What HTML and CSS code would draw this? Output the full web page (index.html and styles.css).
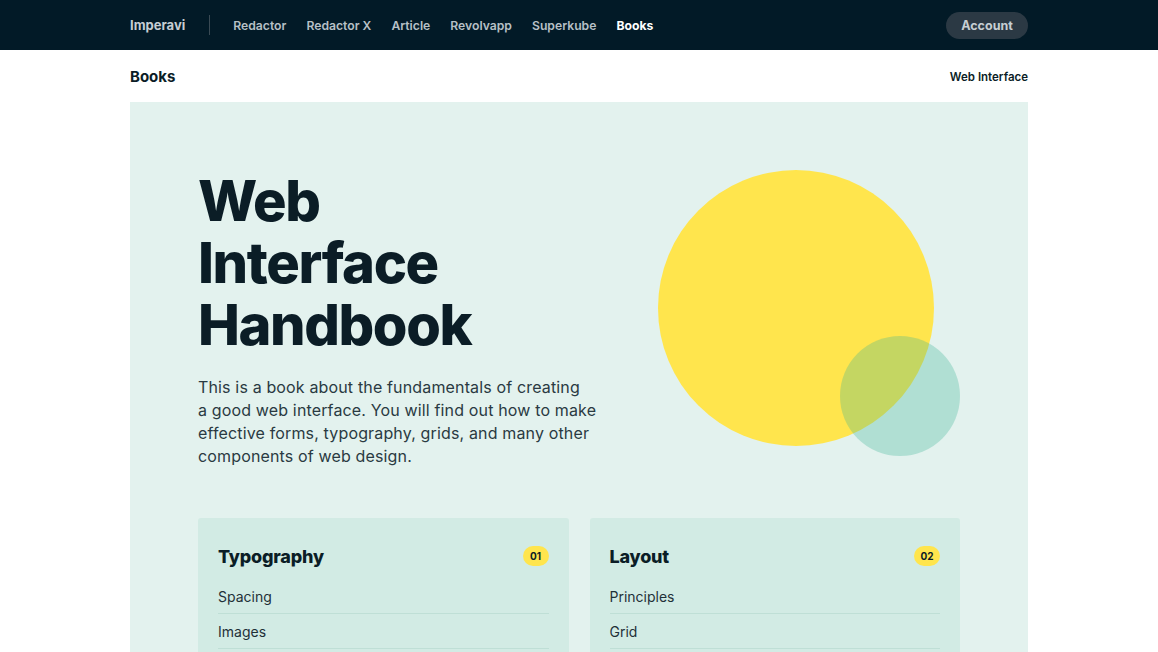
FILE: index.html
```html
<!DOCTYPE html>
<html lang="en">
<head>
<meta charset="utf-8">
<title>Web Interface Handbook</title>
<link rel="stylesheet" href="styles.css">
</head>
<body>
<header class="topbar">
  <div class="wrap topbar-inner">
    <nav class="nav">
      <a class="brand" href="#">Imperavi</a>
      <span class="divider"></span>
      <a class="nav-link" href="#">Redactor</a>
      <a class="nav-link" href="#">Redactor X</a>
      <a class="nav-link" href="#">Article</a>
      <a class="nav-link" href="#">Revolvapp</a>
      <a class="nav-link" href="#">Superkube</a>
      <a class="nav-link active" href="#">Books</a>
    </nav>
    <a class="account" href="#">Account</a>
  </div>
</header>
<div class="wrap subbar">
  <span class="sub-title">Books</span>
  <span class="sub-right">Web Interface</span>
</div>
<main class="wrap">
  <section class="hero">
    <div class="hero-top">
      <div class="hero-text">
        <h1 class="title">Web<br>Interface<br>Handbook</h1>
        <p class="lead">This is a book about the fundamentals of creating<br>a good web interface. You will find out how to make<br>effective forms, typography, grids, and many other<br>components of web design.</p>
      </div>
      <div class="art">
        <span class="circle yellow"></span>
        <span class="circle teal"></span>
      </div>
    </div>
    <div class="cards">
      <div class="card">
        <div class="card-head"><h2>Typography</h2><span class="badge">01</span></div>
        <ul class="items">
          <li>Spacing</li>
          <li>Images</li>
          <li>Text</li>
        </ul>
      </div>
      <div class="card">
        <div class="card-head"><h2>Layout</h2><span class="badge">02</span></div>
        <ul class="items">
          <li>Principles</li>
          <li>Grid</li>
          <li>Alignment</li>
        </ul>
      </div>
    </div>
  </section>
</main>
</body>
</html>
```
FILE: styles.css
```css
* { box-sizing: border-box; }
html, body { margin: 0; padding: 0; }
body {
  font-family: "Inter", "Noto Sans", sans-serif;
  color: #0b1d26;
  background: #fff;
  overflow: hidden;
  height: 652px;
}
a { text-decoration: none; color: inherit; }
.wrap { width: 898px; margin: 0 auto; }

.topbar { background: #021a27; height: 50px; }
.topbar-inner { height: 50px; display: flex; align-items: center; justify-content: space-between; }
.nav { display: flex; align-items: center; }
.brand { font-size: 13px; font-weight: 700; color: #c6ced3; }
.divider { width: 1px; height: 20px; background: #3a4a54; margin: 0 23px 0 24px; }
.nav-link { font-size: 12.2px; font-weight: 600; color: #b7c0c6; margin-right: 20px; }
.nav-link.active { color: #fff; font-weight: 700; }
.account {
  background: #2b3944; color: #c6ced3; font-size: 12.5px; font-weight: 700;
  height: 27px; width: 82px; border-radius: 14px;
  display: flex; align-items: center; justify-content: center;
}

.subbar { height: 52px; display: flex; align-items: center; justify-content: space-between; padding-top: 1px; }
.sub-title { font-size: 15px; font-weight: 700; color: #0b1d26; }
.sub-right { font-size: 11.5px; font-weight: 600; color: #0b1d26; }

.hero { background: #e3f2ee; padding: 68px 68px 0; height: 560px; }
.hero-top { display: flex; justify-content: space-between; }
.hero-text { width: 410px; }
.title {
  margin: 0; font-size: 56px; line-height: 62px; font-weight: 800;
  letter-spacing: -1.4px; color: #0b1d26;
}
.lead {
  margin: 20px 0 0; font-size: 16px; line-height: 23px; color: #2a3a42;
  font-weight: 400; letter-spacing: 0.15px; white-space: nowrap;
}
.art { position: relative; width: 302px; height: 300px; }
.circle { position: absolute; border-radius: 50%; display: block; }
.yellow { width: 276px; height: 276px; left: 0; top: 0; background: #ffe54d; }
.teal { width: 120px; height: 120px; left: 182px; top: 166px; background: rgba(60, 180, 150, 0.3); }

.cards { display: grid; grid-template-columns: 1fr 1fr; gap: 21px; margin-top: 48px; }
.card { background: #d2ebe4; border-radius: 3px; padding: 24px 20px 0; }
.card-head { display: flex; align-items: center; justify-content: space-between; height: 28px; margin-bottom: 9px; }
.card-head h2 { margin: 0; font-size: 18px; font-weight: 800; color: #0b1d26; letter-spacing: -0.2px; }
.badge {
  background: #ffe54d; color: #0b1d26; font-size: 10px; font-weight: 700;
  width: 26px; height: 20px; border-radius: 10px;
  display: flex; align-items: center; justify-content: center;
}
.items { list-style: none; margin: 0; padding: 0; }
.items li {
  height: 35px; display: flex; align-items: center; font-size: 14px; color: #1f3038;
  border-bottom: 1px solid #bfdfd6;
}
```
